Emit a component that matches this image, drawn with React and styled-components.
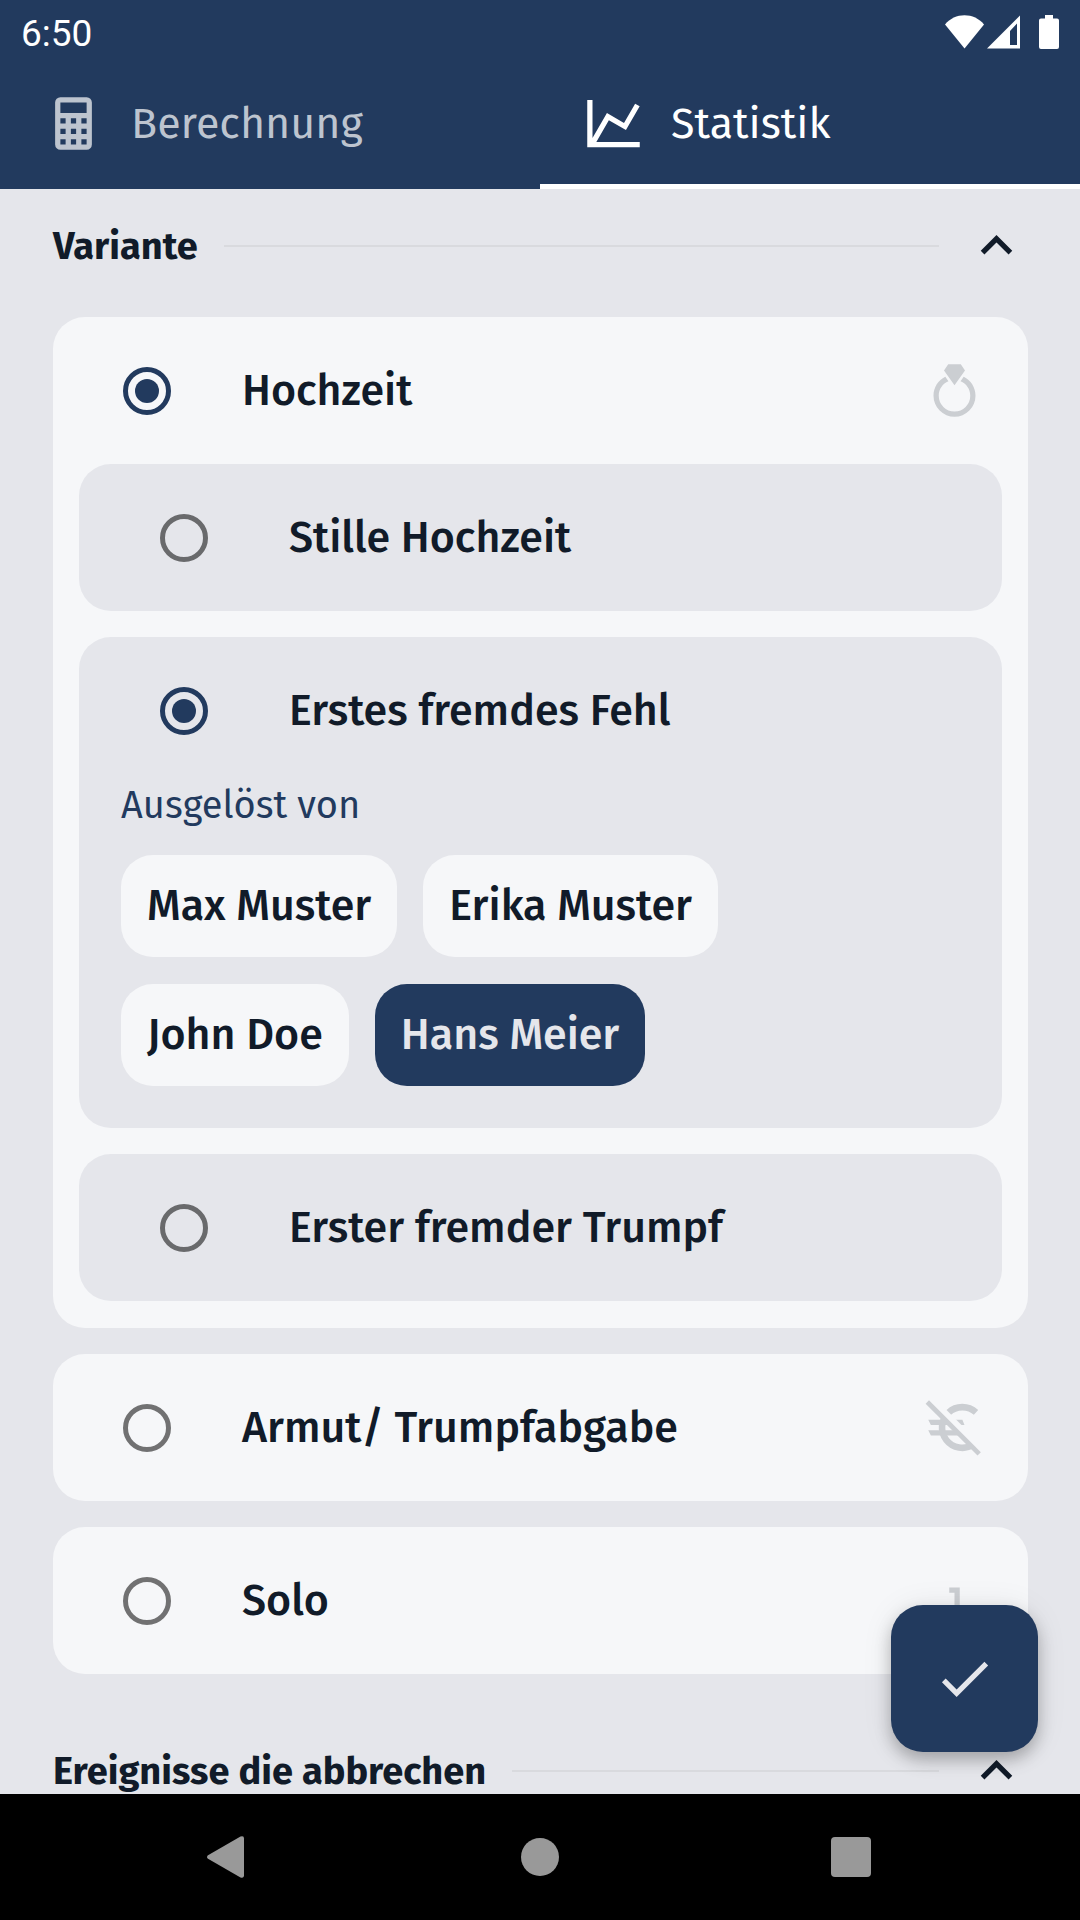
import React, { useState } from "react";
import styled, { createGlobalStyle } from "styled-components";

const color = {
  navy: "#223a5e",
  page: "#e5e6eb",
  card: "#f6f7f9",
  ink: "#111b29",
  faint: "#cbced2",
  ring: "rgba(0, 0, 0, 0.54)",
  tabIdle: "#bdc4cf",
};

const GlobalStyle = createGlobalStyle`
  *, *::before, *::after { box-sizing: border-box; }
  body {
    margin: 0;
    background: ${color.page};
    color: ${color.ink};
    font-family: "Fira Sans", "Noto Sans CJK SC", "Noto Sans", sans-serif;
  }
  button {
    margin: 0;
    padding: 0;
    border: 0;
    background: none;
    color: inherit;
    font: inherit;
    cursor: pointer;
  }
`;

const Screen = styled.div`
  display: flex;
  flex-direction: column;
  height: 100vh;
  overflow: hidden;
`;

/* ---------- top ---------- */

const TopBar = styled.header`
  flex: none;
  background: ${color.navy};
  color: #fff;
`;

const StatusBar = styled.div`
  display: flex;
  align-items: center;
  justify-content: space-between;
  height: 63px;
  padding: 0 21px;
`;

const Clock = styled.time`
  padding-top: 4px;
  font-family: Roboto, sans-serif;
  font-size: 37px;
  line-height: 44px;
`;

const StatusIcons = styled.div`
  display: flex;
  align-items: center;
  gap: 3px;

  svg:last-child {
    margin-left: 16px;
  }
`;

const TabList = styled.div`
  display: flex;
`;

const Text = styled.span`
  white-space: nowrap;
`;

const Tab = styled.button`
  display: flex;
  flex: 1;
  align-items: center;
  gap: 26px;
  height: 126px;
  && {
    padding: 0 42px;
    border-bottom: 5px solid ${(p) => (p.$active ? "#fff" : "transparent")};
    color: ${(p) => (p.$active ? "#fff" : color.tabIdle)};
    font-size: 43px;
    line-height: 52px;
  }
`;

/* ---------- content ---------- */

const Content = styled.main`
  position: relative;
  flex: 1;
  min-height: 0;
  overflow: hidden;
`;

const Sections = styled.div`
  display: flex;
  flex-direction: column;
  gap: 40px;
  padding: 0 52px 0 53px;
`;

const SectionHead = styled.div`
  display: flex;
  align-items: center;
  gap: 26px;
  padding: 25px 0 40px;
`;

const Title = styled.h2`
  margin: 0;
  font-size: 38px;
  font-weight: 700;
  line-height: 46px;
  white-space: nowrap;
`;

const Rule = styled.hr`
  flex: 1;
  height: 2px;
  margin: 0;
  border: 0;
  background: #d9dade;
`;

const Toggle = styled.button`
  display: flex;
`;

const Cards = styled.div`
  display: flex;
  flex-direction: column;
  gap: 26px;
`;

const Card = styled.div`
  padding-bottom: ${(p) => (p.$open ? "27px" : "0")};
  border-radius: 32px;
  background: ${color.card};
  color: ${color.ink};
`;

const SubCards = styled.div`
  display: flex;
  flex-direction: column;
  gap: 26px;
  padding: 0 26px;
`;

const SubCard = styled.div`
  border-radius: 32px;
  background: ${color.page};
`;

const OptionRow = styled.label`
  display: flex;
  align-items: center;
  gap: ${(p) => (p.$nested ? "81px" : "71px")};
  height: 147px;
  padding: 0 42px 0 ${(p) => (p.$nested ? "81px" : "70px")};
  font-size: 43px;
  font-weight: 500;
  line-height: 52px;
  cursor: pointer;

  > svg {
    margin-left: auto;
    color: ${color.faint};
  }
`;

const Radio = styled.input`
  flex: none;
  appearance: none;
  width: 48px;
  height: 48px;
  margin: 0;
  padding: 7px;
  border: 5px solid ${color.ring};
  border-radius: 50%;
  background-clip: content-box;

  &:checked {
    border-color: ${color.navy};
    background-color: ${color.navy};
  }
`;

const Trigger = styled.div`
  display: flex;
  flex-direction: column;
  gap: 26px;
  padding: 0 42px;
`;

const TriggerLabel = styled.div`
  height: 45px;
  color: ${color.navy};
  font-size: 38px;
  line-height: 42px;
`;

const Chips = styled.div`
  display: flex;
  flex-wrap: wrap;
  gap: 27px 26px;
  padding-bottom: 42px;
`;

const Chip = styled.button`
  display: flex;
  align-items: center;
  height: 102px;
  && {
    padding: 0 26px;
    border-radius: 32px;
    background: ${(p) => (p.$selected ? color.navy : color.card)};
    color: ${(p) => (p.$selected ? color.page : color.ink)};
    font-size: 43px;
    font-weight: 500;
    line-height: 52px;
  }
`;

const Fab = styled.button`
  position: absolute;
  right: 42px;
  bottom: 42px;
  display: flex;
  align-items: center;
  justify-content: center;
  width: 147px;
  height: 147px;
  && {
    border-radius: 32px;
    background: ${color.navy};
    color: ${color.page};
  }
  box-shadow: 0 8px 16px rgba(0, 0, 0, 0.25), 0 2px 32px rgba(0, 0, 0, 0.08);
`;

/* ---------- system navigation ---------- */

const NavBar = styled.nav`
  display: flex;
  flex: none;
  height: 126px;
  padding: 0 73px;
  background: #000;
`;

const NavButton = styled.button`
  display: flex;
  flex: 1;
  align-items: center;
  justify-content: center;
  && {
    color: #999;
  }
`;

/* ---------- icons ---------- */

function Icon({ children }) {
  return (
    <svg width="63" height="63" viewBox="0 0 24 24" fill="currentColor" aria-hidden="true">
      {children}
    </svg>
  );
}

const CalculatorIcon = () => (
  <Icon>
    <path d="M7,2H17A2,2 0 0,1 19,4V20A2,2 0 0,1 17,22H7A2,2 0 0,1 5,20V4A2,2 0 0,1 7,2M7,4V8H17V4H7M7,10V12H9V10H7M11,10V12H13V10H11M15,10V12H17V10H15M7,14V16H9V14H7M11,14V16H13V14H11M15,14V16H17V14H15M7,18V20H9V18H7M11,18V20H13V18H11M15,18V20H17V18H15Z" />
  </Icon>
);

const ChartIcon = () => (
  <Icon>
    <path d="M16,11.78L20.24,4.45L21.97,5.45L16.74,14.5L10.23,10.75L5.46,19H22V21H2V3H4V17.54L9.5,8L16,11.78Z" />
  </Icon>
);

const ChevronUpIcon = () => (
  <Icon>
    <path d="M7.41,15.41L12,10.83L16.59,15.41L18,14L12,8L6,14L7.41,15.41Z" />
  </Icon>
);

const RingIcon = () => (
  <Icon>
    <path d="M12,10L8,4.4L9.6,2H14.4L16,4.4L12,10M15.5,6.8L14.3,8.5C16.5,9.4 18,11.5 18,14A6,6 0 0,1 12,20A6,6 0 0,1 6,14C6,11.5 7.5,9.4 9.7,8.5L8.5,6.8C5.8,8.1 4,10.8 4,14A8,8 0 0,0 12,22A8,8 0 0,0 20,14C20,10.8 18.2,8.1 15.5,6.8Z" />
  </Icon>
);

const EuroOffIcon = () => (
  <Icon>
    <mask id="euro-gap" maskUnits="userSpaceOnUse" x="0" y="0" width="24" height="24">
      <rect width="24" height="24" fill="#fff" />
      <path d="M-2,-3.5L26,24.5" stroke="#000" strokeWidth="3" />
    </mask>
    <g mask="url(#euro-gap)">
      <path d="M20.2,6.25A7.75,7.75 0 1,0 19.2,18.5" fill="none" stroke="currentColor" strokeWidth="2.5" />
      <path d="M2,9H15L15.8,11H3L2,9M2,13H15L14.5,15H3L2,13Z" />
    </g>
    <path d="M1.64,2.3L21.4,22.05" stroke="currentColor" strokeWidth="1.8" />
  </Icon>
);

const OneIcon = () => (
  <Icon>
    <path d="M14,17H12V9H10V7H14V17Z" />
  </Icon>
);

const CheckIcon = () => (
  <Icon>
    <path d="M21,7L9,19L3.41,13.41L4.83,12L9,16.17L19.59,5.59L21,7Z" />
  </Icon>
);

const WifiIcon = () => (
  <svg width="39" height="34" viewBox="0 0 39 34" fill="currentColor" aria-hidden="true">
    <path d="M0,9.5C5,3.5 12,0.3 19.5,0.3C27,0.3 34,3.5 39,9.5L19.5,33.5Z" />
  </svg>
);

const SignalIcon = () => (
  <svg width="33" height="34" viewBox="0 0 33 34" fill="currentColor" aria-hidden="true">
    <path fillRule="evenodd" d="M0,33.5L33,0.5V33.5ZM23,16V30H30V8.5Z" />
  </svg>
);

const BatteryIcon = () => (
  <svg width="20" height="34" viewBox="0 0 20 34" fill="currentColor" aria-hidden="true">
    <path d="M6,0H14V3.5H18A2,2 0 0,1 20,5.5V32A2,2 0 0,1 18,34H2A2,2 0 0,1 0,32V5.5A2,2 0 0,1 2,3.5H6Z" />
  </svg>
);

const BackIcon = () => (
  <svg width="44" height="44" viewBox="0 0 44 44" fill="currentColor" aria-hidden="true">
    <path d="M1,20.2L33.5,1.6Q37,0.4 37,3.4V40.6Q37,43.6 33.5,42.4L1,23.8Q-1,22 1,20.2Z" />
  </svg>
);

const HomeIcon = () => (
  <svg width="44" height="44" viewBox="0 0 44 44" fill="currentColor" aria-hidden="true">
    <circle cx="22" cy="22" r="19" />
  </svg>
);

const RecentsIcon = () => (
  <svg width="44" height="44" viewBox="0 0 44 44" fill="currentColor" aria-hidden="true">
    <rect x="2" y="2" width="40" height="40" rx="4" />
  </svg>
);

/* ---------- composed parts ---------- */

function SectionHeader({ children }) {
  return (
    <SectionHead>
      <Title>{children}</Title>
      <Rule />
      <Toggle type="button" aria-label={`${children} einklappen`}>
        <ChevronUpIcon />
      </Toggle>
    </SectionHead>
  );
}

function Option({ group, value, selected, onSelect, nested, icon }) {
  return (
    <OptionRow $nested={nested}>
      <Radio type="radio" name={group} value={value} checked={selected === value} onChange={() => onSelect(value)} />
      <Text>{value}</Text>
      {icon}
    </OptionRow>
  );
}

const players = ["Max Muster", "Erika Muster", "John Doe", "Hans Meier"];

export default function App() {
  const [variant, setVariant] = useState("Hochzeit");
  const [wedding, setWedding] = useState("Erstes fremdes Fehl");
  const [player, setPlayer] = useState("Hans Meier");

  const outer = { group: "variante", selected: variant, onSelect: setVariant };
  const inner = { group: "hochzeit", selected: wedding, onSelect: setWedding, nested: true };

  return (
    <Screen>
      <GlobalStyle />
      <TopBar>
        <StatusBar>
          <Clock>6:50</Clock>
          <StatusIcons>
            <WifiIcon />
            <SignalIcon />
            <BatteryIcon />
          </StatusIcons>
        </StatusBar>
        <TabList role="tablist">
          <Tab type="button" role="tab" aria-selected="false">
            <CalculatorIcon />
            <Text>Berechnung</Text>
          </Tab>
          <Tab type="button" role="tab" aria-selected="true" $active>
            <ChartIcon />
            <Text>Statistik</Text>
          </Tab>
        </TabList>
      </TopBar>

      <Content>
        <Sections>
          <section>
            <SectionHeader>Variante</SectionHeader>
            <Cards>
              <Card $open>
                <Option {...outer} value="Hochzeit" icon={<RingIcon />} />
                <SubCards>
                  <SubCard>
                    <Option {...inner} value="Stille Hochzeit" />
                  </SubCard>
                  <SubCard>
                    <Option {...inner} value="Erstes fremdes Fehl" />
                    <Trigger>
                      <TriggerLabel id="trigger">Ausgelöst von</TriggerLabel>
                      <Chips role="group" aria-labelledby="trigger">
                        {players.map((name) => (
                          <Chip
                            key={name}
                            type="button"
                            aria-pressed={player === name}
                            $selected={player === name}
                            onClick={() => setPlayer(name)}
                          >
                            <Text>{name}</Text>
                          </Chip>
                        ))}
                      </Chips>
                    </Trigger>
                  </SubCard>
                  <SubCard>
                    <Option {...inner} value="Erster fremder Trumpf" />
                  </SubCard>
                </SubCards>
              </Card>
              <Card>
                <Option {...outer} value="Armut/ Trumpfabgabe" icon={<EuroOffIcon />} />
              </Card>
              <Card>
                <Option {...outer} value="Solo" icon={<OneIcon />} />
              </Card>
            </Cards>
          </section>
          <section>
            <SectionHeader>Ereignisse die abbrechen</SectionHeader>
          </section>
        </Sections>
        <Fab type="button" aria-label="Bestätigen">
          <CheckIcon />
        </Fab>
      </Content>

      <NavBar>
        <NavButton type="button" aria-label="Zurück">
          <BackIcon />
        </NavButton>
        <NavButton type="button" aria-label="Startseite">
          <HomeIcon />
        </NavButton>
        <NavButton type="button" aria-label="Übersicht">
          <RecentsIcon />
        </NavButton>
      </NavBar>
    </Screen>
  );
}
